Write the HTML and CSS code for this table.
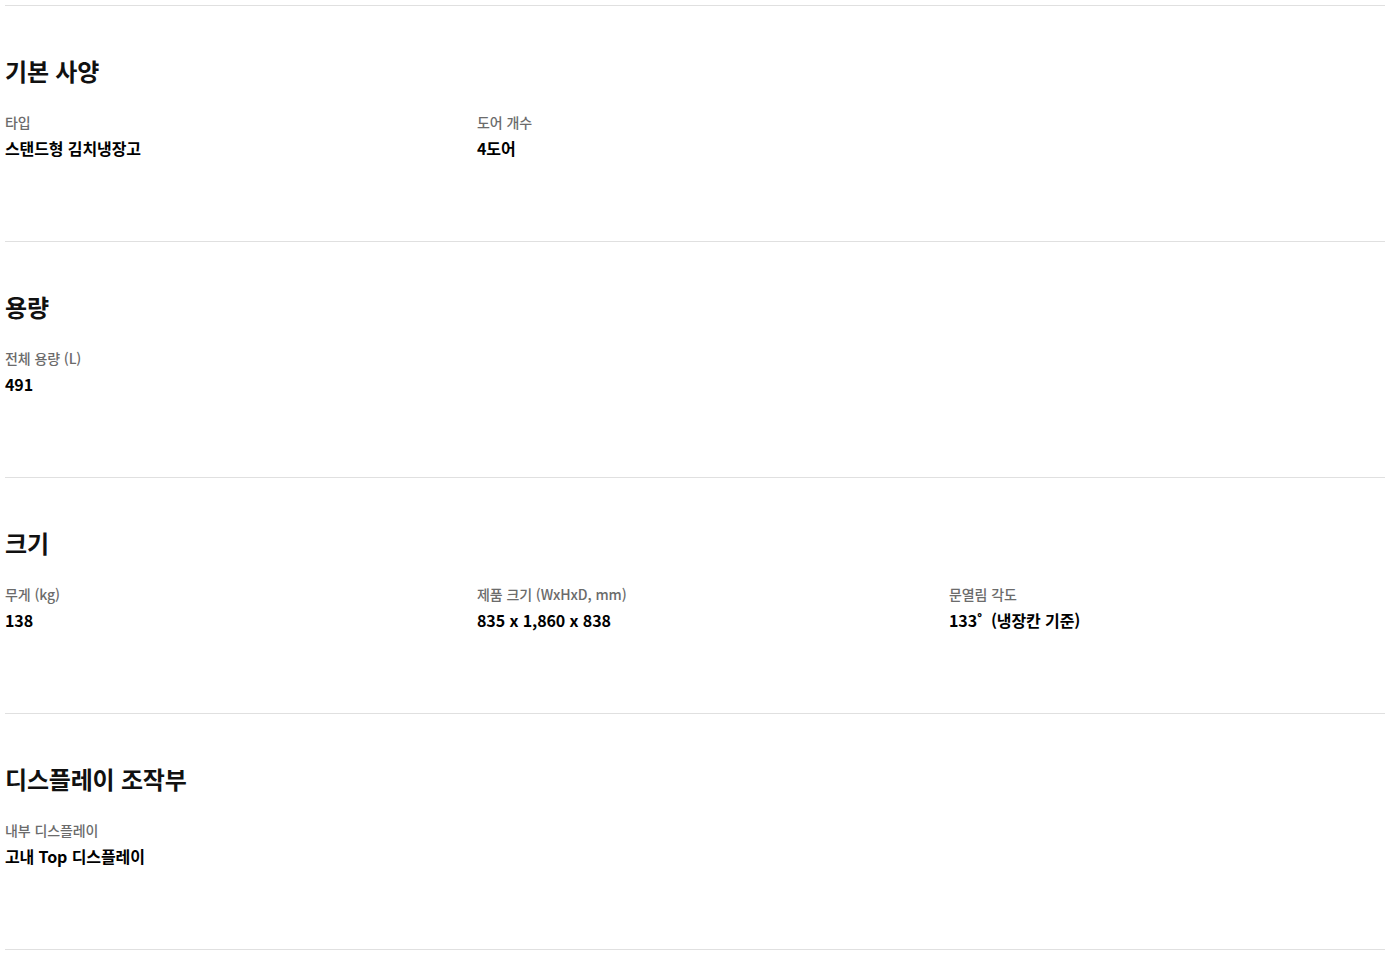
FILE: index.html
```html
<!DOCTYPE html>
<html lang="ko">
<head>
<meta charset="utf-8">
<title>스펙</title>
<link rel="stylesheet" href="styles.css">
</head>
<body>
<div class="spec">
  <section class="group">
    <h2 class="group-title">기본 사양</h2>
    <div class="items">
      <div class="item"><div class="label">타입</div><div class="value">스탠드형 김치냉장고</div></div>
      <div class="item"><div class="label">도어 개수</div><div class="value">4도어</div></div>
    </div>
  </section>
  <section class="group">
    <h2 class="group-title">용량</h2>
    <div class="items">
      <div class="item"><div class="label">전체 용량 (L)</div><div class="value">491</div></div>
    </div>
  </section>
  <section class="group">
    <h2 class="group-title">크기</h2>
    <div class="items">
      <div class="item"><div class="label">무게 (kg)</div><div class="value">138</div></div>
      <div class="item"><div class="label">제품 크기 (WxHxD, mm)</div><div class="value">835 x 1,860 x 838</div></div>
      <div class="item"><div class="label">문열림 각도</div><div class="value">133˚&nbsp; (냉장칸 기준)</div></div>
    </div>
  </section>
  <section class="group">
    <h2 class="group-title">디스플레이 조작부</h2>
    <div class="items">
      <div class="item"><div class="label">내부 디스플레이</div><div class="value">고내 Top 디스플레이</div></div>
    </div>
  </section>
</div>
</body>
</html>
```
FILE: styles.css
```css
html, body {
  margin: 0;
  padding: 0;
  background: #fff;
}
body {
  font-family: "Noto Sans CJK KR", "Noto Sans", sans-serif;
  color: #000;
  padding: 5px 3px 0 5px;
}
.spec {
  border-bottom: 1px solid #e0e0e0;
}
.group {
  border-top: 1px solid #e0e0e0;
  padding: 48px 0 81px;
}
.group-title {
  margin: 0;
  font-size: 24px;
  line-height: 34px;
  font-weight: 700;
  color: #111;
  letter-spacing: -0.2px;
}
.items {
  display: grid;
  grid-template-columns: 472px 472px 1fr;
  margin-top: 24px;
}
.label {
  font-size: 14px;
  line-height: 20px;
  color: #6b6b6b;
  font-weight: 500;
  letter-spacing: -0.1px;
}
.value {
  margin-top: 4px;
  font-size: 16px;
  line-height: 24px;
  font-weight: 700;
  color: #000;
  letter-spacing: -0.1px;
}
```
